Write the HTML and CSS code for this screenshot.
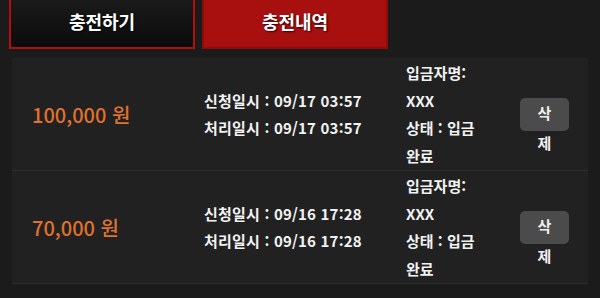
FILE: index.html
```html
<!DOCTYPE html>
<html lang="ko">
<head>
<meta charset="utf-8">
<link rel="stylesheet" href="styles.css">
</head>
<body>
<div class="tabs">
  <div class="tab tab-off">충전하기</div>
  <div class="tab tab-on">충전내역</div>
</div>
<div class="panel">
  <div class="row">
    <div class="amount">100,000 원</div>
    <div class="dates">
      <div>신청일시 : 09/17 03:57</div>
      <div>처리일시 : 09/17 03:57</div>
    </div>
    <div class="info">
      <div>입금자명: XXX</div>
      <div>상태 : 입금 완료</div>
    </div>
    <div class="act"><button class="del">삭제</button></div>
  </div>
  <div class="row">
    <div class="amount">70,000 원</div>
    <div class="dates">
      <div>신청일시 : 09/16 17:28</div>
      <div>처리일시 : 09/16 17:28</div>
    </div>
    <div class="info">
      <div>입금자명: XXX</div>
      <div>상태 : 입금 완료</div>
    </div>
    <div class="act"><button class="del">삭제</button></div>
  </div>
</div>
</body>
</html>
```
FILE: styles.css
```css
html, body {
  margin: 0;
  padding: 0;
  background: #1b1b1b;
  font-family: "Noto Sans CJK KR", "Noto Sans", sans-serif;
  color: #f2f2f2;
  overflow: hidden;
}
.tabs {
  display: flex;
  gap: 7px;
  padding-left: 9px;
  margin-top: -8px;
}
.tab {
  box-sizing: border-box;
  width: 186px;
  height: 57px;
  display: flex;
  align-items: center;
  justify-content: center;
  font-size: 18px;
  font-weight: 700;
  color: #fff;
  text-shadow: 1px 1px 2px rgba(0,0,0,0.8);
}
.tab-off {
  border: 2px solid #b30f0f;
  background: linear-gradient(#1c1c1c, #0b0b0b);
}
.tab-on {
  border: 2px solid #8f0b0b;
  background: #a81010;
}
.panel {
  margin: 9px 12px 0 12px;
  background: #212121;
}
.row {
  box-sizing: border-box;
  height: 113px;
  display: flex;
  align-items: center;
  border-bottom: 1px solid #2f2f2f;
}
.amount {
  width: 172px;
  padding-left: 20px;
  color: #e0712e;
  font-size: 20px;
  font-weight: 500;
}
.dates {
  width: 202px;
  font-size: 15px;
  font-weight: 700;
  line-height: 27px;
  letter-spacing: 0.2px;
}
.info {
  width: 92px;
  font-size: 15px;
  font-weight: 700;
  line-height: 27.5px;
}
.info div {
  width: 84px;
}
.act {
  margin-left: 22px;
  height: 33px;
}
.del {
  box-sizing: border-box;
  width: 49px;
  height: 33px;
  padding: 0 12px;
  border: none;
  border-radius: 5px;
  background: #4b4b4b;
  color: #f0f0f0;
  font-family: "Noto Sans CJK KR", "Noto Sans", sans-serif;
  font-size: 15px;
  font-weight: 700;
  line-height: 30px;
  display: block;
  text-align: center;
  overflow: visible;
}
```
